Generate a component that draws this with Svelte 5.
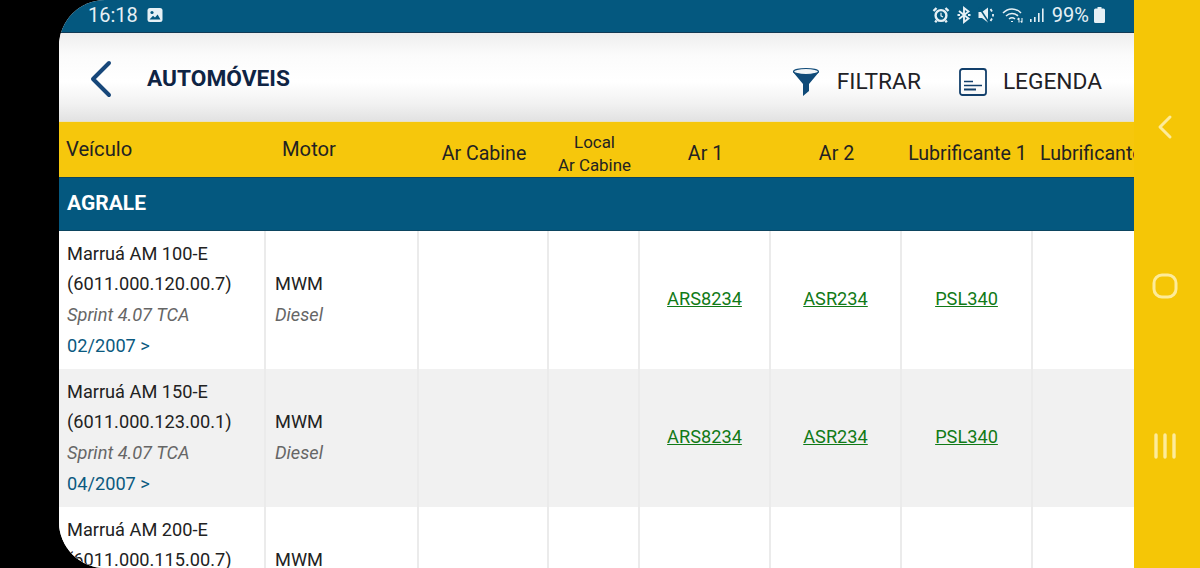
<script>
  const columns = ["Veículo", "Motor", "Ar Cabine", "Local", "Ar 1", "Ar 2", "Lubrificante 1", "Lubrificante 2"];
  const vehicles = [
    { name: "Marruá AM 100-E", code: "(6011.000.120.00.7)", date: "02/2007 >" },
    { name: "Marruá AM 150-E", code: "(6011.000.123.00.1)", date: "04/2007 >" },
    { name: "Marruá AM 200-E", code: "(6011.000.115.00.7)", date: "02/2007 >" }
  ];
</script>

<div class="device">
  <main class="screen">
    <div class="status">
      <div class="status-left">
        <span class="clock">16:18</span>
        <svg width="16" height="16" viewBox="0 0 16 16">
          <rect x="0.5" y="1" width="15" height="14" rx="2.5" fill="#e6f0f5" />
          <circle cx="5" cy="5.5" r="1.6" fill="#04587f" />
          <path d="M2.5 12.5 L6 8.8 L8 10.6 L10.6 7.5 L13.5 12.5 Z" fill="#04587f" />
        </svg>
      </div>
      <div class="status-right">
        <svg width="18" height="18" viewBox="0 0 18 18" fill="none" stroke="#e6f0f5">
          <circle cx="9" cy="9.5" r="5.4" stroke-width="2.4" />
          <path d="M9 6.8 V9.8 L11 11" stroke-width="1.2" />
          <path d="M1.5 5 L4.5 2 M16.5 5 L13.5 2 M4.6 14.5 L3.2 16.2 M13.4 14.5 L14.8 16.2" stroke-width="2.4" />
        </svg>
        <svg width="14" height="18" viewBox="0 0 14 18" fill="none" stroke="#e6f0f5" stroke-width="1.9">
          <path d="M2 5 L11.5 12.5 L7 16 V2 L11.5 5.5 L2 13" />
          <path d="M0.5 9 H3 M11 9 H13.5" />
        </svg>
        <svg width="17" height="18" viewBox="0 0 17 18" fill="#e6f0f5">
          <path d="M0.5 6 H4 L10 1.5 V16.5 L4 12 H0.5 Z" />
          <path d="M1 1.5 L11 16.5" stroke="#04587f" stroke-width="1.5" />
          <path d="M12.5 3 L14 5.5 M15 8 V10.5 M12.5 15 L14 12.5" stroke="#e6f0f5" stroke-width="1.8" fill="none" />
        </svg>
        <svg class="wifi" width="23" height="18" viewBox="0 0 23 18" fill="none" stroke="#e6f0f5" stroke-width="1.5">
          <path d="M1 7 C6 1.5 14 1.5 19 7" />
          <path d="M4 10 C7.5 6.5 12.5 6.5 16 10" />
          <path d="M7 13 C9 11.3 11 11.3 13 13" />
          <path d="M10 15 V16" stroke-width="2" />
          <path d="M17 16.5 V12 M15.5 13.5 L17 12 M20 12 V16.5 M18.7 15.2 L20 16.5" stroke-width="1.1" />
        </svg>
        <svg width="17" height="18" viewBox="0 0 17 18" fill="#e6f0f5">
          <rect x="1" y="13" width="1.6" height="3" />
          <rect x="5" y="11" width="1.6" height="5" />
          <rect x="9" y="7" width="1.6" height="9" />
          <rect x="13" y="2.5" width="1.6" height="13.5" />
        </svg>
        <span class="battery-text">99%</span>
        <svg width="13" height="18" viewBox="0 0 13 18" fill="#e6f0f5">
          <path d="M4.5 1 H8.5 V2.5 H10.5 A1.5 1.5 0 0 1 12 4 V15.5 A1.5 1.5 0 0 1 10.5 17 H2.5 A1.5 1.5 0 0 1 1 15.5 V4 A1.5 1.5 0 0 1 2.5 2.5 H4.5 Z" />
        </svg>
      </div>
    </div>

    <header class="topbar">
      <svg class="back" width="26" height="38" viewBox="0 0 26 38" fill="none">
        <path d="M21 3 L5 19 L21 35" stroke="#17477a" stroke-width="4" stroke-linecap="round" stroke-linejoin="round" />
      </svg>
      <h1>AUTOMÓVEIS</h1>
      <button class="action filter">
        <svg width="28" height="30" viewBox="0 0 28 30">
          <path d="M1 5 L11 17 V29 L17 24 V17 L27 5 Z" fill="#0f4a78" />
          <ellipse cx="14" cy="4.5" rx="12.5" ry="3" fill="#f2f5f7" stroke="#0f4a78" stroke-width="1.2" />
        </svg>
        <span>FILTRAR</span>
      </button>
      <button class="action legend">
        <svg width="28" height="28" viewBox="0 0 28 28" fill="none" stroke="#123f6b">
          <rect x="1" y="1" width="26" height="26" rx="2.5" stroke-width="1.8" />
          <path d="M5 13.5 H14 M5 17.5 H23" stroke-width="1.5" />
          <path d="M5 21.5 H17" stroke-width="2" />
        </svg>
        <span>LEGENDA</span>
      </button>
    </header>

    <div class="table-head cols">
      {#each columns as col, i}
        {#if col === "Local"}
          <div class="th center small"><span>Local</span><span>Ar Cabine</span></div>
        {:else}
          <div class="th" class:first={i === 0} class:motor={i === 1} class:center={i > 1} class:last={i === 7}>{col}</div>
        {/if}
      {/each}
    </div>

    <div class="brand">AGRALE</div>

    {#each vehicles as v, i}
      <div class="row cols" class:alt={i % 2 === 1}>
        <div class="td vehicle">
          <span>{v.name}</span>
          <span>{v.code}</span>
          <em>Sprint 4.07 TCA</em>
          <span class="date">{v.date}</span>
        </div>
        <div class="td engine">
          <span>MWM</span>
          <em>Diesel</em>
        </div>
        <div class="td"></div>
        <div class="td"></div>
        <div class="td link"><a href="#ars">ARS8234</a></div>
        <div class="td link"><a href="#asr">ASR234</a></div>
        <div class="td link"><a href="#psl">PSL340</a></div>
        <div class="td"></div>
      </div>
    {/each}
  </main>

  <nav class="softkeys">
    <svg width="18" height="26" viewBox="0 0 18 26" fill="none" stroke="#fdeb9a" stroke-width="3" stroke-linecap="round" stroke-linejoin="round">
      <path d="M14 3 L4 13 L14 23" />
    </svg>
    <svg width="26" height="26" viewBox="0 0 26 26" fill="none" stroke="#fdeb9a" stroke-width="3">
      <rect x="2" y="2" width="22" height="22" rx="8" />
    </svg>
    <svg width="24" height="26" viewBox="0 0 24 26" fill="none" stroke="#fdeb9a" stroke-width="3.4" stroke-linecap="round">
      <path d="M3 2 V24 M12 2 V24 M21 2 V24" />
    </svg>
  </nav>
</div>

<style>
  :global(body) {
    margin: 0;
    background: #000;
  }

  .device {
    width: 1200px;
    height: 568px;
    display: flex;
    padding-left: 59px;
    box-sizing: border-box;
    overflow: hidden;
    background: #000;
    font-family: Roboto, "Liberation Sans", sans-serif;
  }

  .screen {
    flex: 1;
    min-width: 0;
    overflow: hidden;
    background: #fff;
    border-radius: 46px 0 0 46px;
  }

  .status {
    height: 33px;
    box-sizing: border-box;
    background: #04587f;
    border-bottom: 1px solid #123a55;
    display: flex;
    align-items: center;
    justify-content: space-between;
    padding: 0 28px 2px 29px;
    color: #e6f0f5;
    font-size: 20px;
  }

  .status-left {
    display: flex;
    align-items: center;
    gap: 9px;
  }

  .status-right {
    display: flex;
    align-items: center;
    gap: 7px;
  }

  .wifi {
    margin-right: -3px;
  }

  .battery-text {
    margin-left: -1px;
    margin-right: -3px;
  }

  .topbar {
    height: 89px;
    box-sizing: border-box;
    display: flex;
    align-items: center;
    padding: 0 32px 0 29px;
    background: linear-gradient(#eeeeee 0%, #fbfbfb 25%, #ffffff 55%, #f2f2f2 80%, #e2e2e2 100%);
    border-bottom: 1px solid #e9e2c2;
  }

  .back {
    margin-right: 33px;
    margin-top: 4px;
  }

  h1 {
    margin: 3px auto 0 0;
    font-size: 22.7px;
    font-weight: 700;
    color: #0f2444;
  }

  .action {
    display: flex;
    align-items: center;
    margin-top: 9px;
    border: 0;
    padding: 0;
    background: none;
    font: inherit;
    font-size: 22.7px;
    color: #1f2226;
  }

  .filter {
    gap: 17px;
    margin-right: 38px;
  }

  .legend {
    gap: 16px;
  }

  .cols {
    display: grid;
    grid-template-columns: 207px 153px 130px 91px 131px 131px 131px 131px;
  }

  .table-head {
    height: 55px;
    background: #f6c70c;
    color: #222;
    font-size: 19.6px;
  }

  .th {
    display: flex;
    flex-direction: column;
    justify-content: center;
    padding-top: 8px;
    white-space: nowrap;
  }

  .th.first {
    padding: 0 0 2px 7px;
    font-size: 20.2px;
  }

  .th.motor {
    padding: 0 0 2px 16px;
    font-size: 20.2px;
  }

  .th.center {
    align-items: center;
    text-align: center;
  }

  .th.last {
    align-items: flex-start;
    padding-left: 7px;
  }

  .th.small {
    padding: 8px 0 0;
    font-size: 16.9px;
    line-height: 23px;
  }

  .brand {
    height: 54px;
    box-sizing: border-box;
    display: flex;
    align-items: center;
    padding: 0 0 2px 8px;
    background: #04587f;
    color: #fff;
    font-size: 21px;
    font-weight: 700;
    border-top: 1px solid #0c4560;
    border-bottom: 1px solid #0c4560;
  }

  .row {
    height: 138px;
    background: #fff;
    color: #222;
    font-size: 18.2px;
    line-height: 30.6px;
  }

  .row.alt {
    background: #f1f1f1;
  }

  .td {
    border-right: 2px solid #ebebeb;
    display: flex;
    flex-direction: column;
    justify-content: center;
    white-space: nowrap;
  }

  .td:last-child {
    border-right: 0;
  }

  .vehicle {
    padding-left: 8px;
  }

  .engine {
    padding-left: 9px;
  }

  em {
    color: #666;
  }

  .date {
    color: #0b5a80;
  }

  .link {
    align-items: center;
    padding-bottom: 2px;
  }

  .link a {
    color: #117a17;
  }

  .softkeys {
    flex: 0 0 66px;
    height: 568px;
    background: #f5c606;
    position: relative;
  }

  .softkeys svg {
    position: absolute;
    left: 50%;
    transform: translateX(-50%);
  }

  .softkeys svg:nth-child(1) {
    top: 114px;
    margin-left: -2px;
  }

  .softkeys svg:nth-child(2) {
    top: 273px;
    margin-left: -2px;
  }

  .softkeys svg:nth-child(3) {
    top: 433px;
    margin-left: -2px;
  }
</style>
